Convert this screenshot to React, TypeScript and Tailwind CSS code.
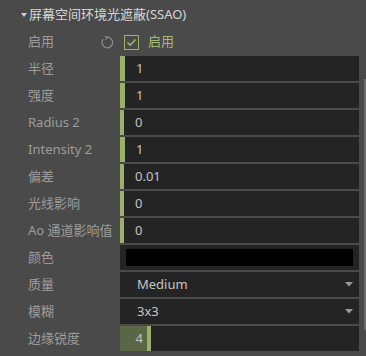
import React from "react";

const font = { fontFamily: '"Noto Sans", "Noto Sans CJK SC", sans-serif' };

type Row =
  | { kind: "slider"; label: string; value: string; bar: number }
  | { kind: "color"; label: string }
  | { kind: "select"; label: string; value: string };

const rows: Row[] = [
  { kind: "slider", label: "半径", value: "1", bar: 5 },
  { kind: "slider", label: "强度", value: "1", bar: 5 },
  { kind: "slider", label: "Radius 2", value: "0", bar: 4 },
  { kind: "slider", label: "Intensity 2", value: "1", bar: 5 },
  { kind: "slider", label: "偏差", value: "0.01", bar: 4 },
  { kind: "slider", label: "光线影响", value: "0", bar: 4 },
  { kind: "slider", label: "Ao 通道影响值", value: "0", bar: 4 },
  { kind: "color", label: "颜色" },
  { kind: "select", label: "质量", value: "Medium" },
  { kind: "select", label: "模糊", value: "3x3" },
];

function Caret() {
  return (
    <svg width="8" height="5" viewBox="0 0 8 5" className="mr-[6px]">
      <path d="M0 0 H8 L4 4.5 Z" fill="#9a9a9a" />
    </svg>
  );
}

function Field({ row }: { row: Row }) {
  if (row.kind === "slider") {
    return (
      <div className="flex h-full flex-1 items-center bg-[#242424]">
        <div className="h-full bg-[#9bb068]" style={{ width: row.bar }} />
        <span className="ml-[11px] text-[#c4c4c4]">{row.value}</span>
      </div>
    );
  }
  if (row.kind === "color") {
    return (
      <div className="flex h-full flex-1 items-center bg-[#242424] px-[6px]">
        <div className="h-[17px] w-full bg-black" />
      </div>
    );
  }
  return (
    <div className="flex h-full flex-1 items-center justify-between bg-[#242424] pl-[17px]">
      <span className="text-[#c4c4c4]">{row.value}</span>
      <Caret />
    </div>
  );
}

export default function App() {
  return (
    <div className="relative h-[356px] w-[366px] overflow-hidden bg-[#4a4a4a] text-[13px]" style={font}>
      <div className="flex h-[30px] items-center pl-[21px] text-[#d6d6d6]">
        <svg width="6" height="4" viewBox="0 0 6 4" className="mr-[2px]">
          <path d="M0 0 H6 L3 4 Z" fill="#d0d0d0" />
        </svg>
        <span>屏幕空间环境光遮蔽(SSAO)</span>
      </div>

      <div className="flex h-[24px] items-center">
        <span className="w-[100px] pl-[28px] text-[#9c9c9c]">启用</span>
        <svg width="15" height="13" viewBox="0 0 15 13" className="mt-[1px]">
          <path d="M3.2 3.2 A5.3 5.3 0 1 0 7.5 1.2" fill="none" stroke="#8c8c8c" strokeWidth="1.3" />
          <path d="M4.6 0.4 L7.9 1.2 L5.6 3.7" fill="none" stroke="#8c8c8c" strokeWidth="1.2" />
        </svg>
        <div className="ml-[9px] flex h-[15px] w-[15px] items-center justify-center border-[1.5px] border-[#9bb068]">
          <svg width="11" height="9" viewBox="0 0 11 9">
            <path d="M1.5 4.5 L4.3 7.2 L9.5 1.5" fill="none" stroke="#a6bb72" strokeWidth="1.5" />
          </svg>
        </div>
        <span className="ml-[9px] text-[#a6bb72]">启用</span>
      </div>

      <div className="mt-[2px] flex flex-col gap-[2px] pr-[7px]">
        {rows.map((row) => (
          <div key={row.label} className="flex h-[25px] items-center">
            <span className="w-[120px] pl-[28px] text-[#9c9c9c]">{row.label}</span>
            <Field row={row} />
          </div>
        ))}
        <div className="flex h-[25px] items-center">
          <span className="w-[120px] pl-[28px] text-[#9c9c9c]">边缘锐度</span>
          <div className="flex h-full flex-1 bg-[#242424]">
            <div className="flex h-full w-[27px] items-center justify-end bg-[#5b6646] pr-[4px] text-[#c4c4c4]">4</div>
            <div className="h-full w-[4px] bg-[#9bb068]" />
          </div>
        </div>
      </div>

      <div className="absolute right-0 top-[79px] h-[251px] w-[2px] bg-[#6a6a6a]" />
    </div>
  );
}
